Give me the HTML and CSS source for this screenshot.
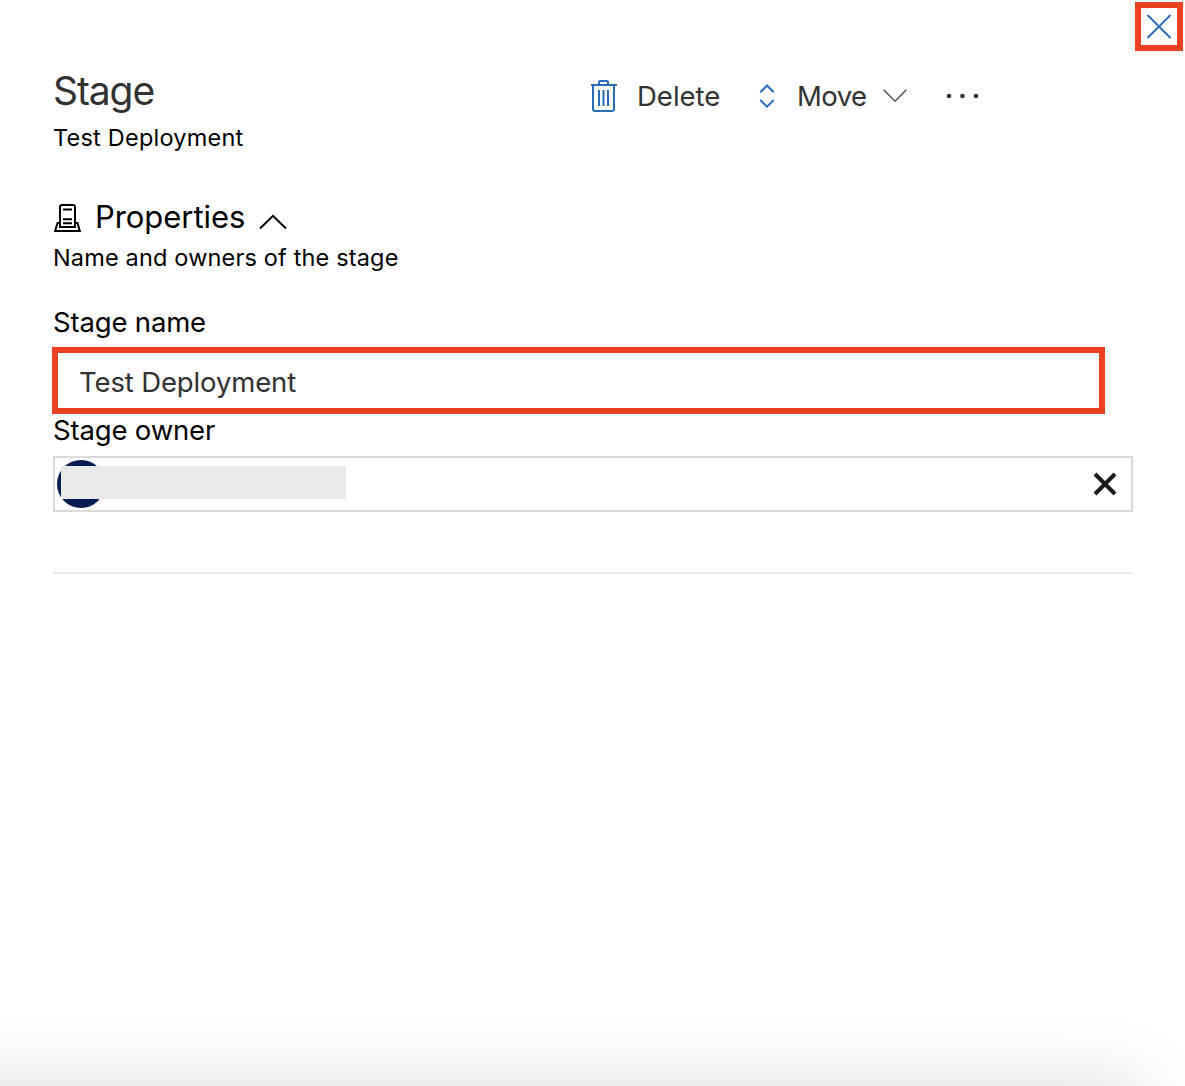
FILE: index.html
```html
<!DOCTYPE html>
<html lang="en">
<head>
<meta charset="utf-8">
<title>Stage</title>
<link rel="stylesheet" href="styles.css">
</head>
<body>
<main class="panel">
  <button class="close" aria-label="Close">
    <svg width="36" height="36" viewBox="0 0 36 36"><path d="M6.500 6 29.500 29M29.500 6 6.500 29" fill="none" stroke="#2b6cb8" stroke-width="1.900"/></svg>
  </button>
  <header class="head">
    <div class="titles">
      <h1 class="title"><span>Stage</span></h1>
      <p class="subtitle"><span>Test Deployment</span></p>
    </div>
    <nav class="toolbar">
      <button class="tool delete">
        <svg width="28" height="34" viewBox="0 0 28 34" fill="none" stroke="#2b6cb8" stroke-width="2"><path d="M1 6H27M9 6V3Q9 2 10 2H17Q18 2 18 3V6M3 6V30Q3 32 5 32H22Q24 32 24 30V6M9 11V27M13.500 11V27M18 11V27"/></svg>
        <span>Delete</span>
      </button>
      <button class="tool move">
        <svg width="16" height="26" viewBox="0 0 16 26" fill="none" stroke="#2b6cb8" stroke-width="2"><path d="M1.300 9.300 8 2.500 14.700 9.300M1.300 17 8 23.700 14.700 17"/></svg>
        <span class="move-label">Move</span>
        <svg class="chevron" width="24" height="14" viewBox="0 0 24 14" fill="none" stroke="#555" stroke-width="1.500"><path d="M.7 .7 12 12.200 23.300 .7"/></svg>
      </button>
      <button class="tool more" aria-label="More">
        <svg width="34" height="6" viewBox="0 0 34 6" fill="#323232"><circle cx="3" cy="3" r="2.300"/><circle cx="16.500" cy="3" r="2.300"/><circle cx="30" cy="3" r="2.300"/></svg>
      </button>
    </nav>
  </header>
  <section class="properties">
    <h2 class="section-title">
      <svg class="stage-icon" width="28" height="30" viewBox="0 0 28 30" fill="none" stroke="#000" stroke-width="2"><path d="M6 24V4Q6 2 8 2H19Q21 2 21 4V24ZM9 6.500H18M9 16.300H18M9 20.300H18M6 20H3.500L1.200 28H25.800L23.500 20H21"/></svg>
      <span class="section-name">Properties</span>
      <svg class="caret" width="28" height="16" viewBox="0 0 28 16" fill="none" stroke="#000" stroke-width="2"><path d="M1 14.500 14 1.800 27 14.500"/></svg>
    </h2>
    <p class="description"><span>Name and owners of the stage</span></p>
    <div class="label name-label"><span>Stage name</span></div>
    <div class="name-field"><span>Test Deployment</span></div>
    <div class="label owner-label"><span>Stage owner</span></div>
    <div class="owner-field">
      <div class="persona"><i class="avatar"></i><i class="mask"></i></div>
      <svg width="24" height="24" viewBox="0 0 24 24" fill="none" stroke="#1b1b1b" stroke-width="4"><path d="M2 2 22 22M22 2 2 22"/></svg>
    </div>
  </section>
  <div class="shade"></div>
</main>
</body>
</html>
```
FILE: styles.css
```css
* { box-sizing: border-box; }
body { margin: 0; background: #fff; font-family: Inter, "Liberation Sans", sans-serif; color: #000; }
h1, h2, p { margin: 0; font-weight: 400; }
button { background: none; border: 0; padding: 0; font: inherit; color: inherit; }
svg { display: block; flex: none; }
.panel { position: relative; height: 1086px; padding: 66px 52px 0 53px; overflow: hidden; }
.close { position: absolute; top: 2px; right: 2px; width: 48px; height: 49px; border: 6px solid #ee4025; }
.head { display: flex; height: 130px; }
.titles { width: 537px; }
.title { font-size: 39px; line-height: 50px; color: #323232; letter-spacing: -1.100px; }
.subtitle { margin-top: 6px; font-size: 23.500px; line-height: 32px; letter-spacing: .22px; }
.toolbar { display: flex; align-items: center; height: 60px; font-size: 27.500px; color: #323232; }
.tool { display: flex; align-items: center; line-height: 36px; }
.delete { width: 169px; gap: 19px; }
.move { width: 187px; gap: 22px; }
.move-label { letter-spacing: -.55px; }
.chevron { margin-left: -6px; }
.section-title { display: flex; align-items: center; height: 42px; font-size: 31px; line-height: 42px; }
.stage-icon { margin: 2px 0 0 1px; }
.section-name { width: 150px; margin-left: 13px; white-space: nowrap; letter-spacing: -.06px; }
.caret { margin: 9px 0 0 14px; }
.description { font-size: 23.500px; line-height: 32px; margin-top: 4px; letter-spacing: .16px; }
.label { font-size: 27.500px; line-height: 34px; letter-spacing: -.17px; }
.name-label { margin-top: 31px; }
.name-field { width: 1053px; height: 67px; margin: 8px 0 0 -1px; padding: 0 21px; border: 6px solid #ee4025; font-size: 27.500px; line-height: 59px; color: #323232; letter-spacing: -.13px; }
.owner-label { height: 42px; line-height: 32px; }
.owner-field { display: flex; align-items: center; justify-content: space-between; height: 56px; padding: 0 14px 0 2px; border: 2px solid #d9d9d9; }
.persona { display: flex; align-items: center; }
.avatar { width: 48px; height: 48px; border-radius: 50%; background: #061c50; }
.mask { width: 285px; height: 33px; margin: -3px 0 0 -44px; background: #eaeaea; }
.properties { height: 378px; border-bottom: 2px solid #e8e8e8; }
.shade { position: absolute; left: -100px; right: 45px; top: 1086px; height: 200px; box-shadow: 0 0 76px rgba(0, 0, 0, .15); }
```
